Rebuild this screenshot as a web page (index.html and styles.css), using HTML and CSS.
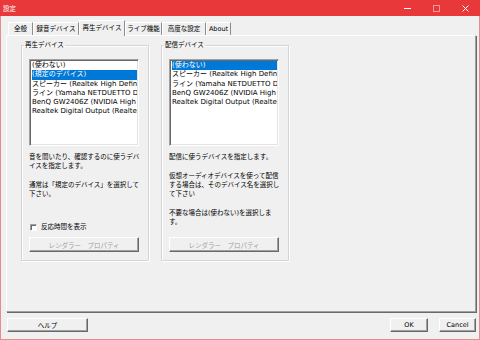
FILE: index.html
```html
<!DOCTYPE html>
<html lang="ja">
<head>
  <meta charset="utf-8">
  <title>設定</title>
  <link rel="stylesheet" href="styles.css">
</head>
<body>
<div class="window">
  <div class="titlebar">
    <span class="title">設定</span>
    <div class="caption">
      <svg viewBox="0 0 29 16"><path d="M11 8.5h7" stroke="#fff"/></svg>
      <svg viewBox="0 0 29 16"><rect x="11.5" y="5.5" width="6" height="6" fill="none" stroke="#f29a9a"/></svg>
      <svg viewBox="0 0 29 16"><path d="M11.5 5.5l6 6M17.5 5.5l-6 6" stroke="#fff"/></svg>
    </div>
  </div>

  <div class="client">
    <div class="tabs">
      <div class="tab">全般</div>
      <div class="tab">録音デバイス</div>
      <div class="tab active">再生デバイス</div>
      <div class="tab">ライブ機能</div>
      <div class="tab">高度な設定</div>
      <div class="tab">About</div>
    </div>

    <div class="panel">
      <fieldset class="group">
        <legend>再生デバイス</legend>
        <div class="group-body">
          <ul class="listbox">
            <li>(使わない)</li>
            <li class="selected">(規定のデバイス)</li>
            <li>スピーカー (Realtek High Definition Audio)</li>
            <li>ライン (Yamaha NETDUETTO Driver)</li>
            <li>BenQ GW2406Z (NVIDIA High Definition Audio)</li>
            <li>Realtek Digital Output (Realtek High Definition Audio)</li>
          </ul>
          <p class="desc">音を聞いたり、確認するのに使うデバ<br>イスを指定します。<br><br>通常は「規定のデバイス」を選択して<br>下さい。</p>
          <label class="check"><span class="box"></span>反応時間を表示</label>
          <button class="btn prop" disabled>レンダラー　プロパティ</button>
        </div>
      </fieldset>

      <fieldset class="group">
        <legend>配信デバイス</legend>
        <div class="group-body">
          <ul class="listbox">
            <li class="selected">(使わない)</li>
            <li>スピーカー (Realtek High Definition Audio)</li>
            <li>ライン (Yamaha NETDUETTO Driver)</li>
            <li>BenQ GW2406Z (NVIDIA High Definition Audio)</li>
            <li>Realtek Digital Output (Realtek High Definition Audio)</li>
          </ul>
          <p class="desc">配信に使うデバイスを指定します。<br><br>仮想オーディオデバイスを使って配信<br>する場合は、そのデバイス名を選択し<br>て下さい<br><br>不要な場合は(使わない)を選択しま<br>す。</p>
          <button class="btn prop" disabled>レンダラー　プロパティ</button>
        </div>
      </fieldset>
    </div>

    <div class="footer">
      <button class="btn help">ヘルプ</button>
      <button class="btn ok">OK</button>
      <button class="btn cancel">Cancel</button>
    </div>
  </div>
</div>
</body>
</html>
```

FILE: styles.css
```css
body {
  margin: 0;
  font-family: "DejaVu Sans", "Noto Sans CJK JP", sans-serif;
  font-size: 6.5px;
  color: #000;
}

.window {
  width: 480px;
  height: 340px;
  box-sizing: border-box;
  background: #f0f0f0;
  border: 1px solid #e68c8c;
  border-top: 0;
  display: flex;
  flex-direction: column;
}

.titlebar {
  height: 16px;
  margin: 0 -1px;
  background: #e8383a;
  color: #fff;
  display: flex;
  align-items: center;
}

.title {
  padding-left: 3px;
  font-size: 6.5px;
}

.caption {
  margin-left: auto;
  display: flex;
}

.caption svg {
  width: 29px;
  height: 16px;
  display: block;
}

.client {
  flex: 1;
  display: flex;
  flex-direction: column;
  padding: 4px 3px 7px 5px;
}

/* tab strip */
.tabs {
  height: 15px;
  padding-left: 2px;
  display: flex;
  align-items: flex-end;
  position: relative;
  z-index: 1;
}

.tab {
  height: 13px;
  line-height: 12px;
  box-sizing: border-box;
  border-top: 1px solid #fff;
  border-left: 1px solid #fff;
  border-right: 1px solid #8c8c8c;
  text-align: center;
  white-space: nowrap;
}

.tab:nth-child(1) { width: 25px; }
.tab:nth-child(2) { width: 46px; }
.tab:nth-child(3) { width: 46px; }
.tab:nth-child(4) { width: 37px; }
.tab:nth-child(5) { width: 44px; }
.tab:nth-child(6) { width: 25px; }

.tab.active {
  height: 16px;
  margin-bottom: -1px;
  line-height: 14px;
  background: #f0f0f0;
}

.panel {
  height: 277px;
  box-sizing: border-box;
  border: 1px solid;
  border-color: #fff #a0a0a0 #a0a0a0 #fff;
  box-shadow: 1px 1px 0 #696969;
  display: flex;
  gap: 12px;
  padding: 5px 0 0 14px;
}

/* group boxes */
.group {
  width: 128px;
  height: 220px;
  box-sizing: border-box;
  margin: 0;
  padding: 0;
  border: 1px solid #d5d5d5;
  box-shadow: inset 1px 1px 0 #fff, 1px 1px 0 #fff;
  min-width: 0;
}

.group legend {
  margin-left: 2px;
  padding: 0 1px;
  line-height: 9px;
}

.group-body {
  height: 100%;
  box-sizing: border-box;
  display: flex;
  flex-direction: column;
  padding: 9px 9px 8px 7px;
}

.listbox {
  width: 110px;
  height: 87px;
  box-sizing: border-box;
  margin: 0;
  padding: 1px 1px 0 2px;
  list-style: none;
  background: #fff;
  border: 1px solid;
  border-color: #a0a0a0 #fff #fff #a0a0a0;
  box-shadow: inset 1px 1px 0 #696969, inset -1px -1px 0 #e3e3e3;
  overflow: hidden;
  font-size: 7px;
}

.listbox li {
  line-height: 9.3px;
  white-space: nowrap;
  overflow: hidden;
}

.listbox li.selected {
  background: #0078d7;
  color: #fff;
}

.desc {
  margin: 7px 0 0;
  line-height: 9.3px;
  white-space: nowrap;
}

.check {
  margin-top: auto;
  margin-bottom: 5px;
  display: flex;
  align-items: center;
  gap: 4px;
  padding-left: 1px;
  line-height: 9px;
}

.check .box {
  width: 7px;
  height: 7px;
  box-sizing: border-box;
  background: #fff;
  border: 1px solid;
  border-color: #a0a0a0 #fff #fff #a0a0a0;
  box-shadow: inset 1px 1px 0 #696969;
}

/* push buttons */
.btn {
  height: 14px;
  box-sizing: border-box;
  padding: 0;
  font: inherit;
  color: #000;
  background: #f0f0f0;
  border: 1px solid;
  border-color: #fff #696969 #696969 #fff;
  box-shadow: inset -1px -1px 0 #a0a0a0;
}

.btn:disabled {
  color: #a0a0a0;
}

.prop {
  width: 110px;
  height: 15px;
  margin-top: auto;
}

.check + .prop {
  margin-top: 0;
}

.footer {
  margin-top: 6px;
  display: flex;
  gap: 11px;
  padding-left: 1px;
}

.help {
  width: 81px;
  margin-right: auto;
}

.ok {
  width: 38px;
}

.cancel {
  width: 37px;
}
```
